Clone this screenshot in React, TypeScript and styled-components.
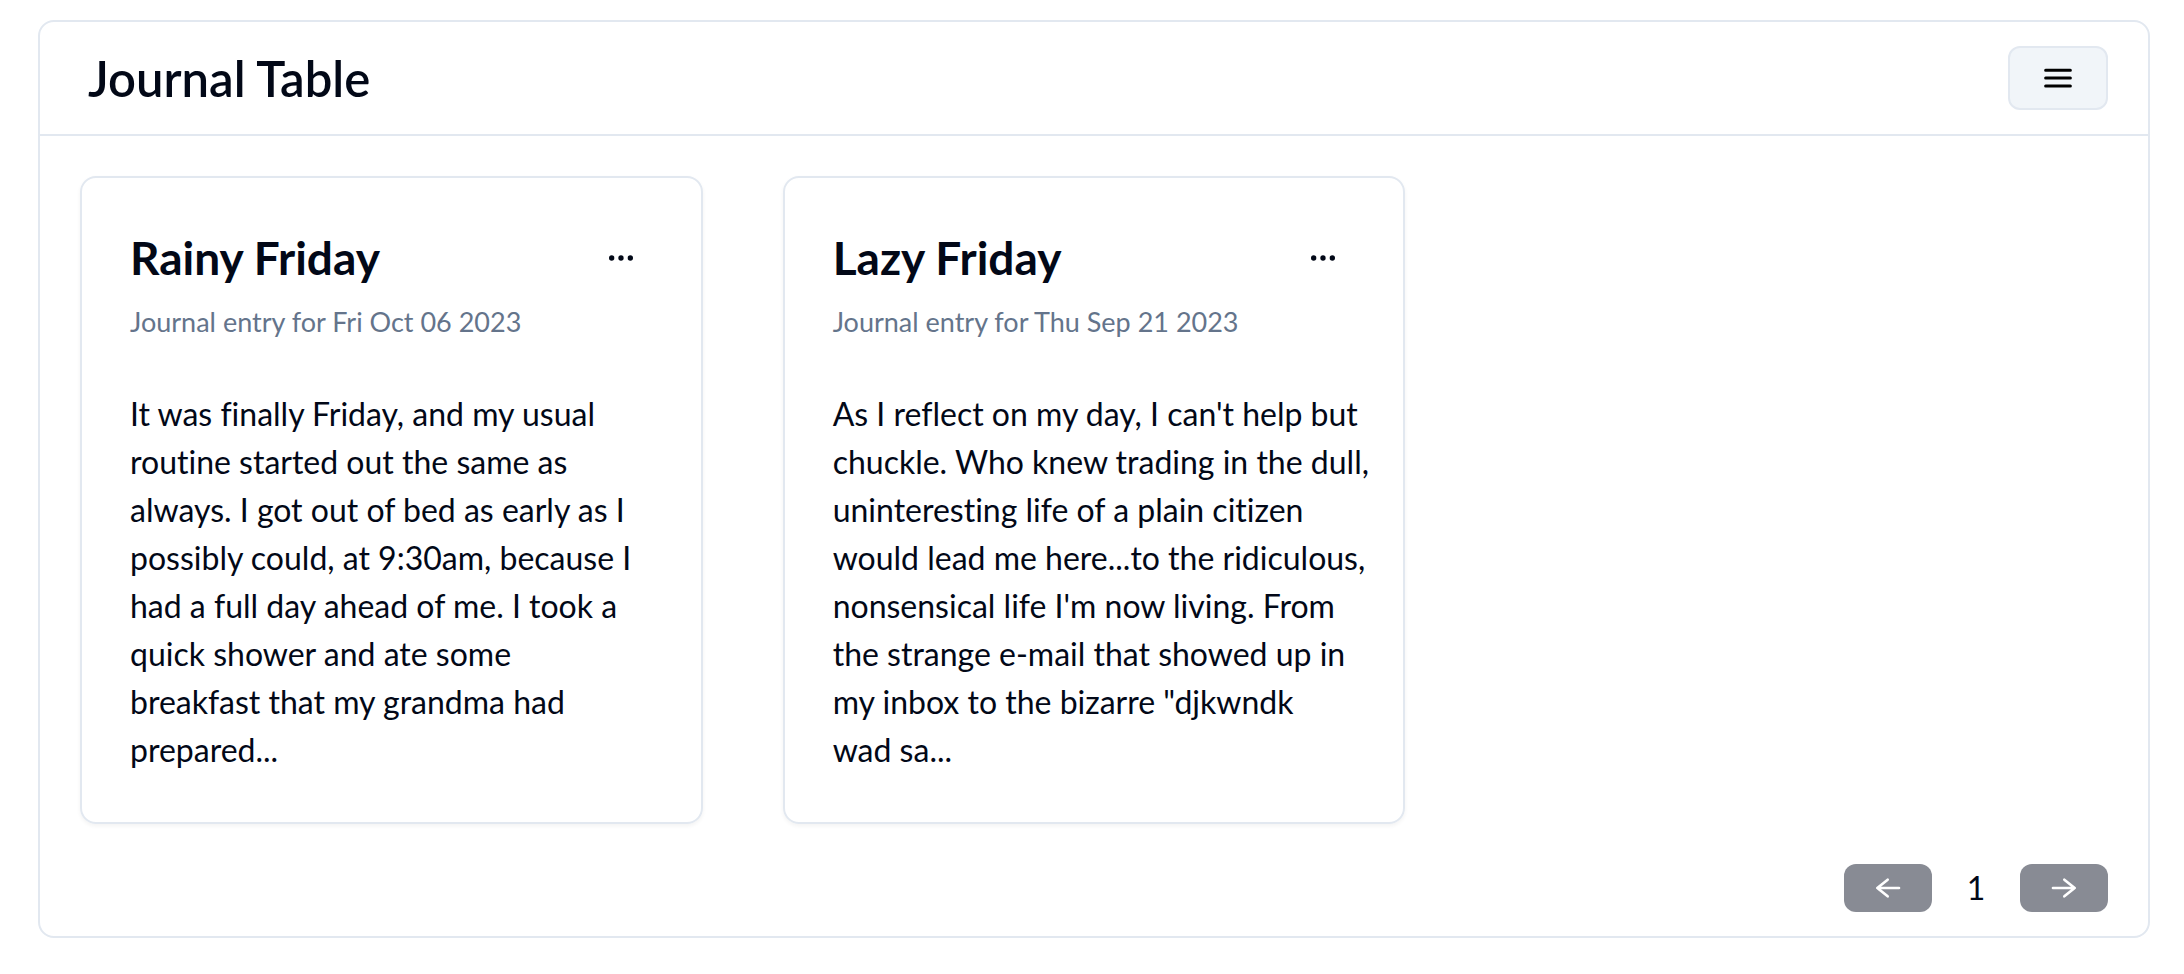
import React from 'react';
import styled, { createGlobalStyle } from 'styled-components';

const GlobalStyle = createGlobalStyle`
  *, *::before, *::after { box-sizing: border-box; }
  body {
    margin: 0;
    background: #fff;
    color: #020817;
    font-family: Lato, 'Liberation Sans', sans-serif;
    font-size: 32px;
    line-height: 48px;
    font-variant-ligatures: none;
  }
  h1, h2, p { margin: 0; }
  button { font: inherit; cursor: pointer; }
`;

const Panel = styled.main`
  margin: 20px 34px 36px 38px;
  border: 2px solid #e2e8f0;
  border-radius: 16px;
`;

const Header = styled.header`
  display: flex;
  align-items: center;
  justify-content: space-between;
  padding: 24px 40px 24px 48px;
  border-bottom: 2px solid #e2e8f0;
`;

const PageTitle = styled.h1`
  font-size: 49px;
  font-weight: 600;
  line-height: 64px;
`;

const MenuButton = styled.button`
  display: flex;
  align-items: center;
  justify-content: center;
  width: 100px;
  height: 64px;
  padding: 0;
  border: 2px solid #e2e8f0;
  border-radius: 12px;
  background: #f1f5f9;
  color: #000;
`;

const CardGrid = styled.section`
  display: grid;
  grid-template-columns: repeat(3, minmax(0, 1fr));
  gap: 80px;
  padding: 40px;
`;

const Card = styled.article`
  padding: 48px;
  border: 2px solid #e2e8f0;
  border-radius: 16px;
  box-shadow: 0 2px 4px rgba(0, 0, 0, 0.05);
`;

const CardHeader = styled.div`
  display: flex;
  align-items: center;
  justify-content: space-between;
  height: 64px;
`;

const CardTitle = styled.h2`
  font-size: 46px;
  font-weight: 700;
  line-height: 64px;
`;

const MoreButton = styled.button`
  display: flex;
  align-items: center;
  padding: 16px;
  border: 0;
  background: none;
  color: #020817;
`;

const CardDate = styled.p`
  margin-top: 12px;
  color: #64748b;
  font-size: 27px;
  line-height: 40px;
`;

const Excerpt = styled.p`
  margin-top: 48px;
  white-space: pre;
`;

const Pagination = styled.nav`
  display: flex;
  justify-content: flex-end;
  align-items: center;
  padding: 0 40px 24px;
`;

const PageButton = styled.button`
  display: flex;
  align-items: center;
  justify-content: center;
  width: 88px;
  height: 48px;
  padding: 0;
  border: 0;
  border-radius: 12px;
  background: #888b94;
  color: #fff;
`;

const PageNumber = styled.span`
  width: 88px;
  text-align: center;
`;

const Icon = ({ size, stroke, d }: { size: number; stroke: number; d: string }) => (
  <svg
    width={size}
    height={size}
    viewBox="0 0 24 24"
    fill="none"
    stroke="currentColor"
    strokeWidth={stroke}
    strokeLinecap="round"
    strokeLinejoin="round"
    aria-hidden="true"
  >
    <path d={d} />
  </svg>
);

const Dots = () => (
  <svg width="32" height="32" viewBox="0 0 24 24" fill="currentColor" aria-hidden="true">
    <circle cx="5" cy="12" r="2" />
    <circle cx="12" cy="12" r="2" />
    <circle cx="19" cy="12" r="2" />
  </svg>
);

const entries = [
  {
    title: 'Rainy Friday',
    date: 'Fri Oct 06 2023',
    text: `It was finally Friday, and my usual
routine started out the same as
always. I got out of bed as early as I
possibly could, at 9:30am, because I
had a full day ahead of me. I took a
quick shower and ate some
breakfast that my grandma had
prepared...`,
  },
  {
    title: 'Lazy Friday',
    date: 'Thu Sep 21 2023',
    text: `As I reflect on my day, I can't help but
chuckle. Who knew trading in the dull,
uninteresting life of a plain citizen
would lead me here...to the ridiculous,
nonsensical life I'm now living. From
the strange e-mail that showed up in
my inbox to the bizarre "djkwndk
wad sa...`,
  },
];

export default function App() {
  return (
    <>
      <GlobalStyle />
      <Panel>
        <Header>
          <PageTitle>Journal Table</PageTitle>
          <MenuButton aria-label="Open menu">
            <Icon size={36} stroke={2} d="M3.75 6.75h16.5M3.75 12h16.5M3.75 17.25h16.5" />
          </MenuButton>
        </Header>
        <CardGrid>
          {entries.map((entry) => (
            <Card key={entry.title}>
              <CardHeader>
                <CardTitle>{entry.title}</CardTitle>
                <MoreButton aria-label={`Options for ${entry.title}`}>
                  <Dots />
                </MoreButton>
              </CardHeader>
              <CardDate>Journal entry for {entry.date}</CardDate>
              <Excerpt>{entry.text}</Excerpt>
            </Card>
          ))}
        </CardGrid>
        <Pagination aria-label="Pagination">
          <PageButton aria-label="Previous page">
            <Icon size={32} stroke={2} d="M20.25 12H4M11.75 5.75L4 12l7.75 6.25" />
          </PageButton>
          <PageNumber>1</PageNumber>
          <PageButton aria-label="Next page">
            <Icon size={32} stroke={2} d="M3.75 12H20M12.25 5.75L20 12l-7.75 6.25" />
          </PageButton>
        </Pagination>
      </Panel>
    </>
  );
}
